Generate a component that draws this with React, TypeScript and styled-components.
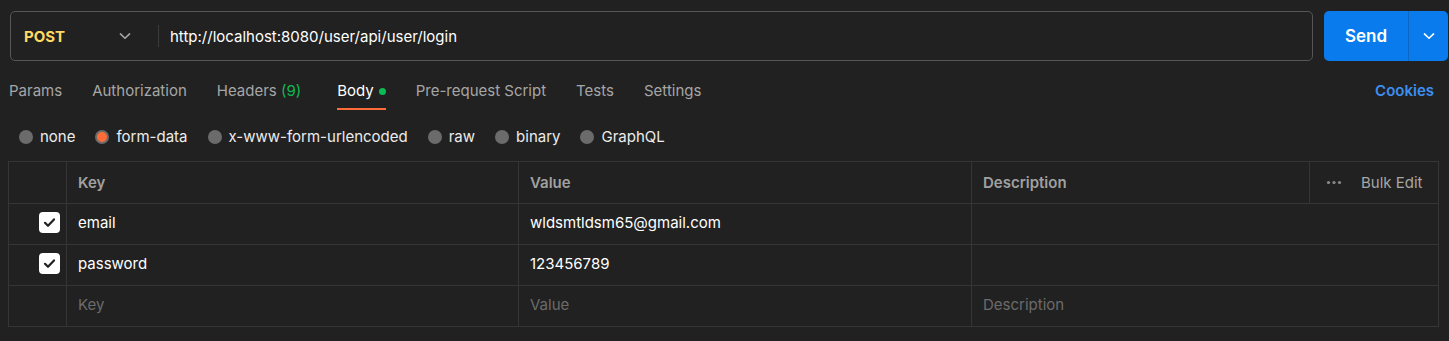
import React from "react";
import styled, { createGlobalStyle } from "styled-components";

const GlobalStyle = createGlobalStyle`
  html, body {
    margin: 0;
    padding: 0;
    background: #212121;
  }
  body {
    font-family: Inter, "Noto Sans", "Liberation Sans", sans-serif;
    font-size: 15px;
    color: #ffffff;
    -webkit-font-smoothing: antialiased;
  }
`;

const Page = styled.div`
  width: 1449px;
  height: 341px;
  box-sizing: border-box;
  padding: 11px 0 0 8px;
  background: #212121;
  overflow: hidden;
`;

const TopBar = styled.div`
  display: flex;
  gap: 11px;
  height: 50px;
  margin-left: 2px;
  margin-right: 1px;
`;

const UrlBox = styled.div`
  flex: 1;
  display: flex;
  align-items: center;
  border: 1px solid #565656;
  border-radius: 5px;
  box-sizing: border-box;
`;

const MethodSelect = styled.div`
  width: 147px;
  box-sizing: border-box;
  padding: 0 25px 0 13px;
  display: flex;
  align-items: center;
  justify-content: space-between;
`;

const Method = styled.span`
  color: #ffd964;
  font-weight: 700;
  font-size: 15px;
`;

const Divider = styled.div`
  width: 1px;
  height: 22px;
  background: #3b3b3b;
`;

const UrlText = styled.div`
  padding-left: 11px;
  font-size: 15px;
  color: #ffffff;
`;

const SendGroup = styled.div`
  width: 124px;
  display: flex;
  background: #097bed;
  border-radius: 5px;
  overflow: hidden;
`;

const SendLabel = styled.div`
  width: 84px;
  display: flex;
  align-items: center;
  justify-content: center;
  border-right: 1px solid #0a67c4;
  font-size: 17px;
  font-weight: 600;
  color: #ffffff;
`;

const SendMore = styled.div`
  flex: 1;
  display: flex;
  align-items: center;
  justify-content: center;
`;

const TabsRow = styled.div`
  display: flex;
  align-items: flex-start;
  margin-top: 10px;
  padding-left: 1px;
  padding-right: 15px;
`;

const TabList = styled.div`
  display: flex;
  gap: 30px;
  flex: 1;
`;

const Tab = styled.div<{ $active?: boolean }>`
  display: flex;
  align-items: center;
  gap: 5px;
  padding: 10px 0 7px;
  margin-left: ${(p) => (p.$active ? "6px" : "0")};
  line-height: 20px;
  font-size: 15px;
  color: ${(p) => (p.$active ? "#ffffff" : "#a6a6a6")};
  border-bottom: 2px solid ${(p) => (p.$active ? "#ff6c37" : "transparent")};
`;

const Count = styled.span`
  color: #0cbb52;
`;

const Dot = styled.span`
  width: 7px;
  height: 7px;
  border-radius: 50%;
  background: #0cbb52;
`;

const Cookies = styled.div`
  padding-top: 10px;
  line-height: 20px;
  color: #3d8ff1;
  font-weight: 600;
`;

const RadioRow = styled.div`
  display: flex;
  gap: 20px;
  margin-top: 17px;
  padding-left: 11px;
  line-height: 20px;
`;

const RadioItem = styled.label`
  display: flex;
  align-items: center;
  gap: 7px;
  color: #ececec;
  font-size: 15px;
`;

const RadioCircle = styled.span<{ $checked?: boolean }>`
  width: 14px;
  height: 14px;
  box-sizing: border-box;
  border-radius: 50%;
  background: ${(p) => (p.$checked ? "#ff6c37" : "#6b6b6b")};
  border: ${(p) => (p.$checked ? "2px solid #6b6b6b" : "none")};
`;

const Table = styled.div`
  margin-top: 14px;
  width: 1431px;
  box-sizing: border-box;
  border: 1px solid #353535;
  border-bottom: none;
`;

const HeaderRow = styled.div`
  display: grid;
  grid-template-columns: 57px 452px 453px 338px 1fr;
  height: 42px;
  box-sizing: border-box;
  border-bottom: 1px solid #353535;
`;

const Row = styled.div`
  display: grid;
  grid-template-columns: 57px 452px 453px 1fr;
  height: 41px;
  box-sizing: border-box;
  border-bottom: 1px solid #353535;
`;

const Cell = styled.div<{ $first?: boolean; $tone?: "head" | "value" | "placeholder" }>`
  display: flex;
  align-items: center;
  box-sizing: border-box;
  padding-left: 11px;
  padding-bottom: ${(p) => (p.$tone === "head" ? "0" : "3px")};
  border-left: ${(p) => (p.$first ? "none" : "1px solid #353535")};
  font-size: 15px;
  font-weight: ${(p) => (p.$tone === "head" ? 600 : 400)};
  color: ${(p) =>
    p.$tone === "head" ? "#a0a0a0" : p.$tone === "placeholder" ? "#6b6b6b" : "#ffffff"};
`;

const CheckCell = styled.div`
  display: flex;
  align-items: center;
  justify-content: flex-end;
  padding-right: 6px;
  padding-bottom: 3px;
`;

const CheckBox = styled.span`
  width: 21px;
  height: 21px;
  border-radius: 4px;
  background: #ffffff;
  display: flex;
  align-items: center;
  justify-content: center;
`;

const BulkCell = styled.div`
  display: flex;
  align-items: center;
  gap: 19px;
  padding-left: 16px;
  border-left: 1px solid #353535;
  color: #a6a6a6;
  font-size: 15px;
`;

const Chevron = ({ color, size = 14 }: { color: string; size?: number }) => (
  <svg width={size} height={size} viewBox="0 0 14 14" fill="none">
    <path d="M3 5.2 L7 9 L11 5.2" stroke={color} strokeWidth="1.4" strokeLinecap="round" strokeLinejoin="round" />
  </svg>
);

const Check = () => (
  <svg width="13" height="13" viewBox="0 0 13 13" fill="none">
    <path d="M2 6.8 L5 9.8 L11 3.4" stroke="#212121" strokeWidth="2.2" strokeLinecap="round" strokeLinejoin="round" />
  </svg>
);

const Dots = () => (
  <svg width="16" height="5" viewBox="0 0 16 5" fill="none">
    <circle cx="2.5" cy="2.5" r="1.6" fill="#8a8a8a" />
    <circle cx="8" cy="2.5" r="1.6" fill="#8a8a8a" />
    <circle cx="13.5" cy="2.5" r="1.6" fill="#8a8a8a" />
  </svg>
);

const radios = ["none", "form-data", "x-www-form-urlencoded", "raw", "binary", "GraphQL"];

const rows = [
  { key: "email", value: "wldsmtldsm65@gmail.com" },
  { key: "password", value: "123456789" },
];

export default function App() {
  return (
    <>
      <GlobalStyle />
      <Page>
        <TopBar>
          <UrlBox>
            <MethodSelect>
              <Method>POST</Method>
              <Chevron color="#a6a6a6" size={16} />
            </MethodSelect>
            <Divider />
            <UrlText>http://localhost:8080/user/api/user/login</UrlText>
          </UrlBox>
          <SendGroup>
            <SendLabel>Send</SendLabel>
            <SendMore>
              <Chevron color="#ffffff" size={16} />
            </SendMore>
          </SendGroup>
        </TopBar>

        <TabsRow>
          <TabList>
            <Tab>Params</Tab>
            <Tab>Authorization</Tab>
            <Tab>
              <span>
                Headers <Count>(9)</Count>
              </span>
            </Tab>
            <Tab $active>
              Body
              <Dot />
            </Tab>
            <Tab>Pre-request Script</Tab>
            <Tab>Tests</Tab>
            <Tab>Settings</Tab>
          </TabList>
          <Cookies>Cookies</Cookies>
        </TabsRow>

        <RadioRow>
          {radios.map((r) => (
            <RadioItem key={r}>
              <RadioCircle $checked={r === "form-data"} />
              {r}
            </RadioItem>
          ))}
        </RadioRow>

        <Table>
          <HeaderRow>
            <CheckCell />
            <Cell $tone="head">Key</Cell>
            <Cell $tone="head">Value</Cell>
            <Cell $tone="head">Description</Cell>
            <BulkCell>
              <Dots />
              Bulk Edit
            </BulkCell>
          </HeaderRow>
          {rows.map((r) => (
            <Row key={r.key}>
              <CheckCell>
                <CheckBox>
                  <Check />
                </CheckBox>
              </CheckCell>
              <Cell $tone="value">{r.key}</Cell>
              <Cell $tone="value">{r.value}</Cell>
              <Cell />
            </Row>
          ))}
          <Row>
            <CheckCell />
            <Cell $tone="placeholder">Key</Cell>
            <Cell $tone="placeholder">Value</Cell>
            <Cell $tone="placeholder">Description</Cell>
          </Row>
        </Table>
      </Page>
    </>
  );
}
